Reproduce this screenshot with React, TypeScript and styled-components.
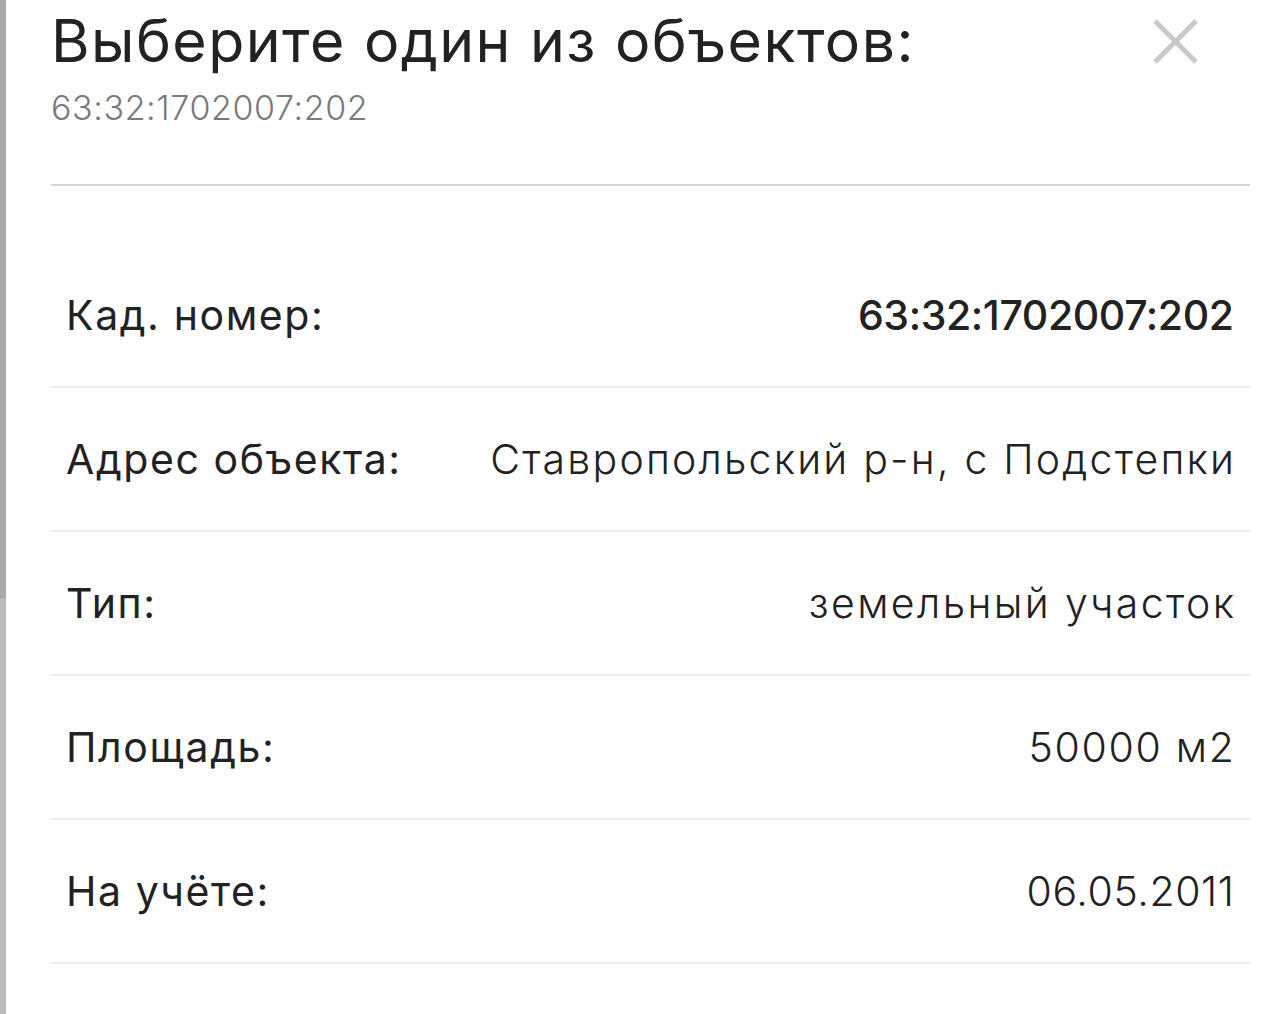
import React from "react";
import styled, { createGlobalStyle } from "styled-components";

const GlobalStyle = createGlobalStyle`
  html, body {
    margin: 0;
    padding: 0;
    background: #ffffff;
  }
  body {
    font-family: Inter, "Open Sans", "Liberation Sans", sans-serif;
    color: #222222;
  }
`;

const Page = styled.div`
  display: flex;
  min-height: 1014px;
  overflow: hidden;
`;

// left edge of the underlying page peeking out from behind the sheet
const EdgeStrip = styled.div`
  flex: 0 0 6px;
  background: linear-gradient(to bottom, #a9a9a9 0, #a9a9a9 598px, #bababa 598px);
`;

const Sheet = styled.div`
  flex: 0 0 1199px;
  margin-left: 45px;
`;

const Header = styled.header`
  display: flex;
  align-items: flex-start;
  justify-content: space-between;
  padding-top: 5px;
  padding-bottom: 56px;
  border-bottom: 2px solid #d4d4d4;
`;

const TitleBlock = styled.div`
  display: flex;
  flex-direction: column;
`;

const Title = styled.h1`
  margin: 0;
  font-size: 59px;
  line-height: 72px;
  font-weight: 400;
  color: #222222;
  letter-spacing: 1.45px;
`;

const Subtitle = styled.div`
  margin-top: 11px;
  font-size: 34px;
  line-height: 40px;
  font-weight: 300;
  color: #7a7a7a;
  letter-spacing: 0.6px;
`;

const CloseButton = styled.button`
  margin: 8px 46px 0 0;
  padding: 0;
  width: 57px;
  height: 57px;
  border: none;
  background: transparent;
  display: flex;
  align-items: center;
  justify-content: center;
  cursor: pointer;
`;

const List = styled.div`
  display: flex;
  flex-direction: column;
  padding-top: 58px;
`;

const Row = styled.div`
  display: flex;
  align-items: center;
  justify-content: space-between;
  height: 142px;
  padding: 0 16px 0 15px;
  border-bottom: 2px solid #ebebeb;
`;

const Label = styled.span`
  font-size: 41px;
  font-weight: 400;
  color: #222222;
  letter-spacing: 1.6px;
`;

const Value = styled.span<{ $strong?: boolean; $tracking: number }>`
  font-size: 41px;
  font-weight: ${(p) => (p.$strong ? 500 : 300)};
  color: #222222;
  text-align: right;
  letter-spacing: ${(p) => p.$tracking}px;
  margin-right: ${(p) => -p.$tracking}px;
`;

const rows = [
  { label: "Кад. номер:", value: "63:32:1702007:202", strong: true, tracking: -0.4 },
  { label: "Адрес объекта:", value: "Ставропольский р-н, с Подстепки", tracking: 2.2 },
  { label: "Тип:", value: "земельный участок", tracking: 2.4 },
  { label: "Площадь:", value: "50000 м2", tracking: 1.7 },
  { label: "На учёте:", value: "06.05.2011", tracking: 0.6 },
];

const CloseIcon = () => (
  <svg width="47" height="47" viewBox="0 0 47 47" fill="none">
    <path d="M3 3 L44 44 M44 3 L3 44" stroke="#c9c9c9" strokeWidth="5" strokeLinecap="butt" />
  </svg>
);

export default function App() {
  return (
    <>
      <GlobalStyle />
      <Page>
        <EdgeStrip />
        <Sheet>
          <Header>
            <TitleBlock>
              <Title>Выберите один из объектов:</Title>
              <Subtitle>63:32:1702007:202</Subtitle>
            </TitleBlock>
            <CloseButton aria-label="Закрыть">
              <CloseIcon />
            </CloseButton>
          </Header>
          <List>
            {rows.map((r) => (
              <Row key={r.label}>
                <Label>{r.label}</Label>
                <Value $strong={r.strong} $tracking={r.tracking}>
                  {r.value}
                </Value>
              </Row>
            ))}
          </List>
        </Sheet>
      </Page>
    </>
  );
}
